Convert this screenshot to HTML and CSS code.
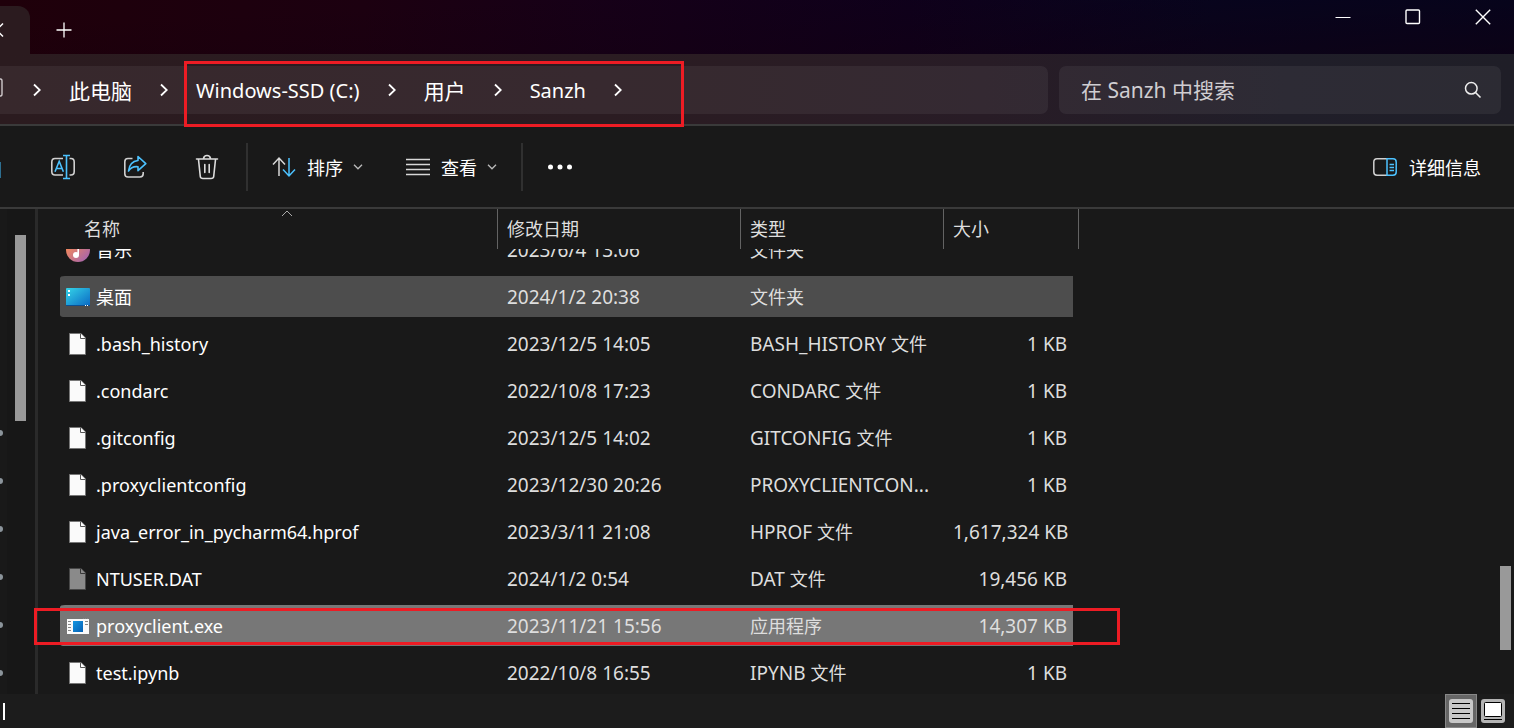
FILE: index.html
```html
<!DOCTYPE html>
<html lang="zh-CN">
<head>
<meta charset="utf-8">
<title>Sanzh</title>
<link rel="stylesheet" href="styles.css">
</head>
<body>
<div class="window">
  <div class="chrome">
    <header class="titlebar">
      <div class="tab">
        <button class="tab-close" aria-label="关闭标签页"><svg width="15" height="16" viewBox="0 0 15 16"><path d="M1 1.5l13 13M14 1.5l-13 13" stroke="#fff" stroke-width="1.5" fill="none"/></svg></button>
      </div>
      <button class="new-tab" aria-label="新建标签页"><svg width="16" height="16" viewBox="0 0 16 16"><path d="M.5 8h15M8 .5v15" stroke="#fff" stroke-width="1.3"/></svg></button>
      <div class="controls">
        <button aria-label="最小化"><svg width="16" height="16" viewBox="0 0 16 16"><path d="M.5 8.5h15" stroke="#fff"/></svg></button>
        <button aria-label="最大化"><svg width="16" height="16" viewBox="0 0 16 16"><rect x="1" y="1" width="13.5" height="13.5" rx="1" fill="none" stroke="#fff" stroke-width="1.4"/></svg></button>
        <button aria-label="关闭"><svg width="16" height="16" viewBox="0 0 16 16"><path d="M.8.8l14.4 14.4M15.2.8L.8 15.2" stroke="#fff" stroke-width="1.4"/></svg></button>
      </div>
    </header>
    <div class="navbar">
      <nav class="address" aria-label="路径">
        <svg class="pc" width="3" height="20" viewBox="0 0 3 20"><path d="M0 1h.5Q2 1 2 3v13Q2 18 .5 18H0" fill="none" stroke="#cfc9cb" stroke-width="1.4"/></svg>
        <svg class="chev" width="8" height="14" viewBox="0 0 8 14"><path d="M1 1.5L6.8 7 1 12.5"/></svg>
        <a href="#" class="zh">此电脑</a>
        <svg class="chev" width="8" height="14" viewBox="0 0 8 14"><path d="M1 1.5L6.8 7 1 12.5"/></svg>
        <a href="#">Windows-SSD (C:)</a>
        <svg class="chev" width="8" height="14" viewBox="0 0 8 14"><path d="M1 1.5L6.8 7 1 12.5"/></svg>
        <a href="#" class="zh">用户</a>
        <svg class="chev" width="8" height="14" viewBox="0 0 8 14"><path d="M1 1.5L6.8 7 1 12.5"/></svg>
        <a href="#">Sanzh</a>
        <svg class="chev" width="8" height="14" viewBox="0 0 8 14"><path d="M1 1.5L6.8 7 1 12.5"/></svg>
      </nav>
      <label class="search">
        <input type="text" placeholder="在 Sanzh 中搜索" aria-label="在 Sanzh 中搜索">
        <svg width="18" height="18" viewBox="0 0 18 18"><circle cx="7.3" cy="7.3" r="5.8" fill="none" stroke="#eee" stroke-width="1.5"/><path d="M11.5 11.5l5 5" stroke="#eee" stroke-width="1.6"/></svg>
      </label>
    </div>
    <div class="mark mark-path"></div>
  </div>

  <div class="toolbar">
    <span class="clipped-tool"></span>
    <button class="tool" aria-label="重命名"><svg width="26" height="26" viewBox="0 0 26 26" fill="none" stroke-width="1.6"><path d="M13 4.5H5Q1.800 4.500 1.800 8v9.500Q1.800 21 5 21h8M19.500 4.500h1.500q3.200 0 3.200 3.500v9.500q0 3.500-3.200 3.500h-1.500" stroke="#d0d0d0"/><path d="M13 1.500h7M13 24.500h7M16.500 1.500v23M5 17.800l4.200-10.500 4.200 10.500M6.500 14.500h5.500" stroke="#4cc2ff"/></svg></button>
    <button class="tool" aria-label="共享"><svg width="26" height="26" viewBox="0 0 26 26" fill="none" stroke-width="1.6" stroke-linejoin="round"><path d="M10.500 4.500H6Q2.800 4.500 2.800 7.700v12Q2.800 23 6 23h12q3.200 0 3.200-3.200V18" stroke="#d0d0d0"/><path d="M16 2.500l7.800 7.200-7.800 7v-4Q9.500 12 6.500 17 7.500 7.500 16 6.500z" stroke="#4cc2ff"/></svg></button>
    <button class="tool" aria-label="删除"><svg width="26" height="26" viewBox="0 0 26 26" fill="none" stroke="#dcdcdc" stroke-width="1.6" stroke-linecap="round" stroke-linejoin="round"><path d="M2.500 5h21M9.500 4.500q.5-3 3.500-3t3.500 3M4.500 5.500l1.800 17Q6.500 24.500 9 24.500h8q2.500 0 2.700-2l1.800-17M10.800 10.500v8M15.200 10.500v8"/></svg></button>
    <span class="divider"></span>
    <button class="menu"><svg width="24" height="24" viewBox="0 0 24 24" fill="none" stroke-width="1.5"><path d="M7 21V3M1 9.500L7 3l6 6.500" stroke="#d8d8d8"/><path d="M17 3v18M11 14.500l6 6.500 6-6.500" stroke="#4cc2ff"/></svg><span>排序</span><svg class="down" width="10" height="6" viewBox="0 0 10 6"><path d="M1 .8l4 4 4-4"/></svg></button>
    <button class="menu view"><svg width="24" height="18" viewBox="0 0 24 18"><path d="M0 1.500h24M0 6.500h24M0 11.500h24M0 16.500h24" stroke="#d8d8d8" stroke-width="1.4"/></svg><span>查看</span><svg class="down" width="10" height="6" viewBox="0 0 10 6"><path d="M1 .8l4 4 4-4"/></svg></button>
    <span class="divider"></span>
    <button class="more" aria-label="更多"><svg width="26" height="6" viewBox="0 0 26 6" fill="#fff"><circle cx="3.5" cy="3" r="2.5"/><circle cx="13" cy="3" r="2.5"/><circle cx="22.5" cy="3" r="2.5"/></svg></button>
    <button class="menu details"><svg width="24" height="18" viewBox="0 0 24 18" fill="none" stroke-width="1.5"><path d="M14 .8H4Q.8.8.8 4v10Q.8 17.200 4 17.200h10" stroke="#d0d0d0"/><path d="M14 .8h6q3.200 0 3.200 3.200v10q0 3.200-3.200 3.200h-6zM16.500 6.500h4.500M16.500 9.500h4.500M16.500 12.500h4.500" stroke="#4cc2ff"/></svg><span>详细信息</span></button>
  </div>

  <main class="content">
    <aside class="sidebar">
      <div class="pins"><i></i><i></i><i></i><i></i><i></i><i></i></div>
      <div class="side-track"><div class="thumb side-thumb"></div></div>
    </aside>
    <section class="files" id="files">
      <table>
        <colgroup><col class="c-name"><col class="c-date"><col class="c-type"><col class="c-size"></colgroup>
        <thead><tr>
          <th>名称<svg class="sort" width="12" height="7" viewBox="0 0 12 7"><path d="M1 6l5-5 5 5" fill="none" stroke="#aaa"/></svg></th>
          <th>修改日期</th><th>类型</th><th>大小</th>
        </tr></thead>
        <tbody>
          <tr><td><div class="name"><svg width="24" height="24" viewBox="0 0 24 24"><defs><linearGradient id="mu" x1="0" y1="0" x2="1" y2="1"><stop offset=".2" stop-color="#f58a5a"/><stop offset="1" stop-color="#9a5fb8"/></linearGradient></defs><circle cx="12" cy="12" r="12" fill="url(#mu)"/><circle cx="10" cy="17" r="3" fill="#fff"/><path d="M12.200 17V5l5 2" stroke="#fff" stroke-width="1.6" fill="none"/></svg>音乐</div></td><td>2023/6/4 13:06</td><td><span class="cjk">文件夹</span></td><td></td></tr>
          <tr class="hover"><td><div class="name"><svg width="24" height="24" viewBox="0 0 24 24"><defs><linearGradient id="de" x1="0" y1="0" x2="1" y2="1"><stop offset="0" stop-color="#35d5e8"/><stop offset="1" stop-color="#0a68c4"/></linearGradient></defs><rect y="3" width="24" height="18" rx="1" fill="url(#de)"/><path d="M0 20.500h24" stroke="#0b4f92"/><path d="M2 5h2v2H2zM2 9h2v2H2zM19 20h1v1h-1zM21 20h1v1h-1z" fill="#fff"/></svg>桌面</div></td><td>2024/1/2 20:38</td><td><span class="cjk">文件夹</span></td><td></td></tr>
          <tr><td><div class="name"><svg width="24" height="24" viewBox="0 0 24 24"><use href="#doc"/></svg>.bash_history</div></td><td>2023/12/5 14:05</td><td>BASH_HISTORY <span class="cjk">文件</span></td><td>1 KB</td></tr>
          <tr><td><div class="name"><svg width="24" height="24" viewBox="0 0 24 24"><use href="#doc"/></svg>.condarc</div></td><td>2022/10/8 17:23</td><td>CONDARC <span class="cjk">文件</span></td><td>1 KB</td></tr>
          <tr><td><div class="name"><svg width="24" height="24" viewBox="0 0 24 24"><use href="#doc"/></svg>.gitconfig</div></td><td>2023/12/5 14:02</td><td>GITCONFIG <span class="cjk">文件</span></td><td>1 KB</td></tr>
          <tr><td><div class="name"><svg width="24" height="24" viewBox="0 0 24 24"><use href="#doc"/></svg>.proxyclientconfig</div></td><td>2023/12/30 20:26</td><td>PROXYCLIENTCON...</td><td>1 KB</td></tr>
          <tr><td><div class="name"><svg width="24" height="24" viewBox="0 0 24 24"><use href="#doc"/></svg>java_error_in_pycharm64.hprof</div></td><td>2023/3/11 21:08</td><td>HPROF <span class="cjk">文件</span></td><td>1,617,324 KB</td></tr>
          <tr><td><div class="name"><svg class="dim" width="24" height="24" viewBox="0 0 24 24"><use href="#doc"/></svg>NTUSER.DAT</div></td><td>2024/1/2 0:54</td><td>DAT <span class="cjk">文件</span></td><td>19,456 KB</td></tr>
          <tr class="selected"><td><div class="name"><svg width="24" height="24" viewBox="0 0 24 24"><defs><linearGradient id="ex" x1="0" y1="0" x2="1" y2="1"><stop offset="0" stop-color="#1596e0"/><stop offset="1" stop-color="#0560b5"/></linearGradient></defs><rect x="1" y="5" width="22" height="15" fill="#fafafa"/><rect x="7" y="7" width="10" height="11" fill="url(#ex)"/><path d="M2 7.500h3M2 10.500h3M2 13.500h3M2 16.500h3M19 7.500h3M19 10.500h3M17 4.500h1M19 4.500h1M21 4.500h1" stroke="#888"/></svg>proxyclient.exe</div></td><td>2023/11/21 15:56</td><td><span class="cjk">应用程序</span></td><td>14,307 KB</td></tr>
          <tr><td><div class="name"><svg width="24" height="24" viewBox="0 0 24 24"><use href="#doc"/></svg>test.ipynb</div></td><td>2022/10/8 16:55</td><td>IPYNB <span class="cjk">文件</span></td><td>1 KB</td></tr>
        </tbody>
      </table>
    </section>
    <div class="main-track"><div class="thumb main-thumb"></div></div>
    <div class="mark mark-row"></div>
  </main>

  <footer class="status">
    <span class="status-sep"></span>
    <div class="views">
      <button class="on" aria-label="详细信息"><svg width="24" height="24" viewBox="0 0 24 24"><rect width="24" height="24" rx="3" fill="#c8c8c8"/><path d="M3 4.500h18M3 9.500h18M3 14.500h18M3 19.500h18" stroke="#000"/></svg></button>
      <button aria-label="大图标"><svg width="24" height="24" viewBox="0 0 24 24"><rect width="24" height="24" rx="3" fill="#b4b4b4"/><rect x="3.5" y="3.5" width="17" height="14" rx="1" fill="#fff" stroke="#000"/><path d="M3 20.500h18" stroke="#000"/></svg></button>
    </div>
  </footer>
</div>
<svg width="0" height="0" class="defs"><symbol id="doc" viewBox="0 0 24 24"><path d="M3.500 1.500H15l4.500 4.500v16.500h-16z" fill="#fafafa" stroke="#777"/><path d="M14.500 1.500V6.500h5" fill="#fff" stroke="#555"/></symbol></svg>
<script src="script.js"></script>
</body>
</html>
```
FILE: styles.css
```css
* { box-sizing: border-box; }
html, body { height: 100%; margin: 0; }
body {
  background: #191919;
  color: #fff;
  font-family: "Noto Sans", "Noto Sans CJK SC", sans-serif;
  font-size: 18px;
  overflow: hidden;
}
button { background: none; border: 0; padding: 0; color: inherit; font: inherit; display: flex; align-items: center; justify-content: center; }
a { color: inherit; text-decoration: none; }
svg { display: block; flex: none; }
.defs { position: absolute; }
.window { height: 100vh; display: flex; flex-direction: column; }
.chrome { position: relative; }

.titlebar {
  height: 54px;
  display: flex;
  background: linear-gradient(177deg, #1f000a00 20%, #14000e88 100%), linear-gradient(90deg, #1f000a 0%, #1c0010 24%, #160018 40%, #0e001c 60%, #050520 80%, #020520 100%);
}
.tab { width: 30px; height: 48px; margin-top: 6px; background: #2b1b1f; border-radius: 0 12px 0 0; overflow: hidden; display: flex; justify-content: flex-start; }
.tab-close { width: 4px; justify-content: flex-end; }
.new-tab { width: 68px; height: 60px; }
.controls { margin-left: auto; display: flex; gap: 10px; height: 33px; padding-right: 1px; }
.controls button { width: 60px; }

.navbar {
  display: grid;
  grid-template-columns: 1fr 442px;
  gap: 11px;
  padding: 12px 13px 10px 0;
  border-bottom: 2px solid #3a3a3a;
  background: linear-gradient(90deg, #2b1b1f 0%, #2b1c22 40%, #281c26 65%, #201e29 85%, #1f1e27 100%);
}
.address, .search { height: 48px; display: flex; align-items: center; font-size: 21px; background: rgba(255, 255, 255, .06); }
.address { border-radius: 0 7px 7px 0; gap: 28px; font-size: 20px; }
.zh { font-size: 21px; }
.pc { margin: 0 2px 4px 0; }
.chev path { fill: none; stroke: #fff; stroke-width: 1.8; }
.search { border-radius: 7px; padding: 0 19px 0 22px; }
.search input { flex: 1; min-width: 0; border: 0; padding: 0; background: none; color: #fff; font: inherit; outline: 0; }
.search input::placeholder { color: #cfcdd1; opacity: 1; }

.toolbar { display: flex; align-items: center; height: 83px; border-bottom: 2px solid #3a3a3a; padding-right: 33px; }
.clipped-tool { width: 1px; height: 16px; background: #2d6f91; margin: 6px 26px 0 0; }
.tool { width: 72px; height: 48px; }
.divider { width: 2px; height: 48px; background: #303030; margin: 0 24px 0 3px; }
.menu { gap: 11px; height: 48px; }
.menu .down { margin-left: -1px; }
.down path { fill: none; stroke: #bbb; stroke-width: 1.3; }
.view { margin: 0 21px 0 43px; }
.more { height: 48px; }
.details { margin-left: auto; gap: 12px; }

.content { flex: 1; min-height: 0; display: flex; position: relative; }
.sidebar { width: 38px; display: flex; flex: none; border-right: 3px solid #2a2a2a; }
.pins { width: 7px; padding-top: 221px; display: flex; flex-direction: column; gap: 42px; }
.pins i { width: 3px; height: 6px; flex: none; background: #8b949b; border-radius: 0 3px 3px 0; }
.side-track { flex: 1; padding: 26px 0 0 8px; background: #171717; }
.thumb { width: 11px; background: #999; }
.side-thumb { height: 186px; }
.files { flex: 1; overflow: hidden; padding-left: 22px; }
.main-track { width: 14px; display: flex; flex-direction: column; justify-content: flex-end; padding-bottom: 44px; }
.main-thumb { height: 84px; }

table { width: 1019px; table-layout: fixed; border-collapse: separate; border-spacing: 0; font-size: 19px; }
.c-name { width: 438px; }
.c-date { width: 243px; }
.c-type { width: 203px; }
.c-size { width: 135px; }
th { position: sticky; top: 0; z-index: 1; height: 40px; padding: 0 9px; background: #191919; border-right: 1px solid #636363; font-size: 18px; font-weight: 400; text-align: left; color: #dedede; line-height: 40px; }
th:first-child { padding-left: 24px; }
.sort { position: absolute; top: 1px; left: 50%; margin-left: 2px; }
td { height: 47px; padding: 0 9px; border: solid transparent; border-width: 3px 0; background-clip: padding-box; white-space: nowrap; line-height: 24px; color: #dedede; overflow: hidden; }
td:first-child { padding-left: 6px; color: #fff; border-radius: 5px 0 0 5px; }
td:last-child { padding-right: 6px; border-right-width: 6px; text-align: right; }
.name { display: flex; align-items: center; gap: 6px; font-size: 18px; }
.cjk { font-size: 18px; }
.dim { opacity: .5; }
.hover td { background-color: #4d4d4d; }
.selected td { background-color: #777; }

.mark { position: absolute; border: 3px solid #ed1c24; pointer-events: none; z-index: 2; }
.mark-path { left: 184px; top: 61px; width: 500px; height: 66px; }
.mark-row { left: 34px; top: 399px; width: 1086px; height: 37px; }

.status { height: 34px; display: flex; align-items: center; background: #1c1c1c; padding-left: 3px; }
.status-sep { width: 2px; height: 17px; background: #fff; }
.views { margin-left: auto; display: flex; height: 100%; padding-right: 5px; }
.views button { width: 32px; height: 34px; border: 1px solid transparent; }
.views .on { background: #666; border-color: #888; }
```
FILE: script.js
```js
document.getElementById("files").scrollTop = 23;
```
